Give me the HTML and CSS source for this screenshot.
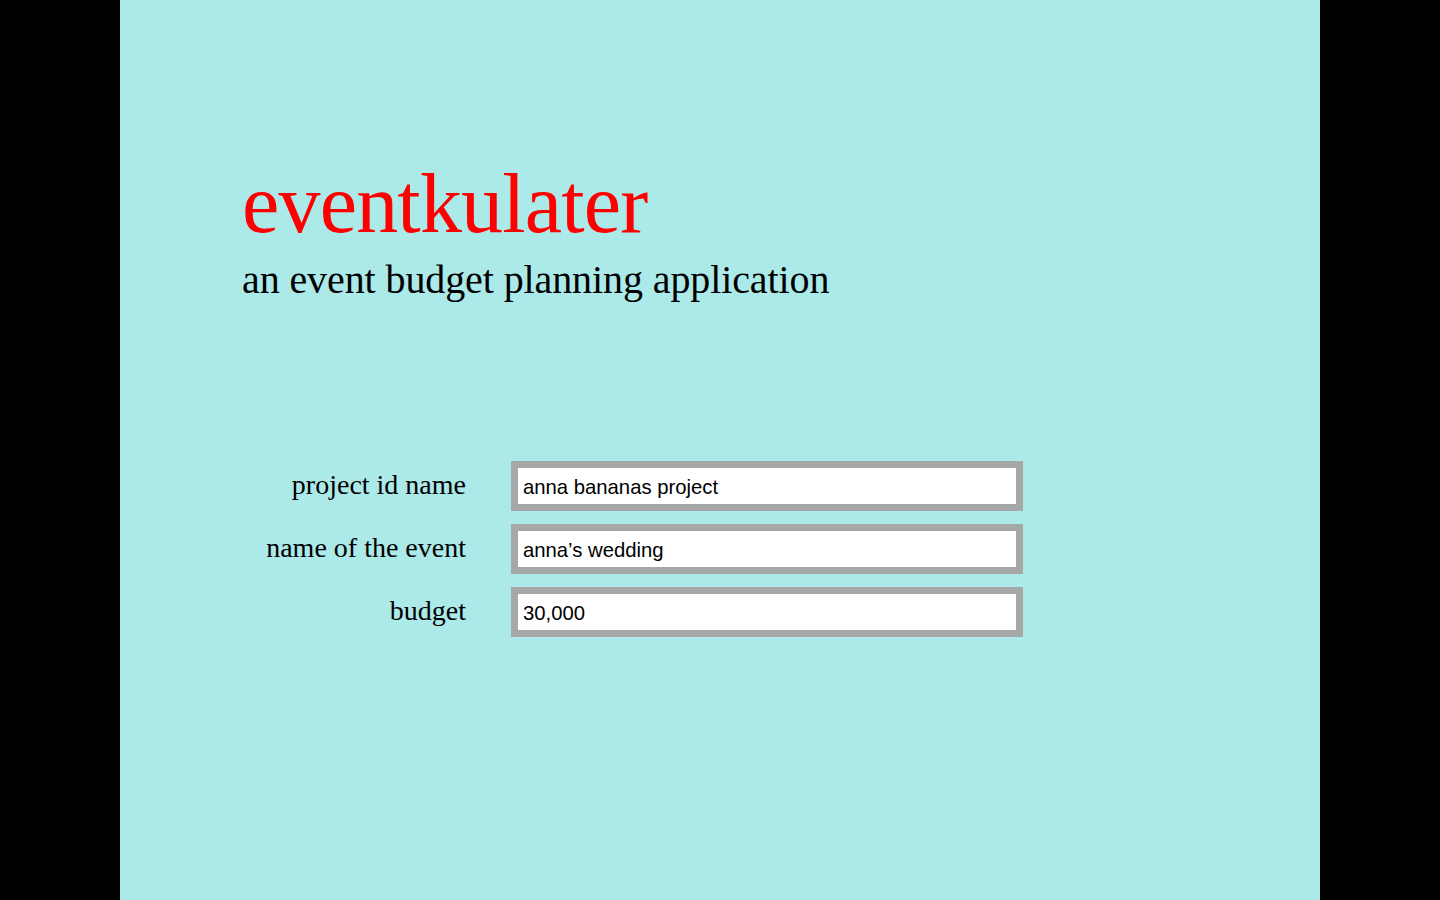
FILE: index.html
```html
<!DOCTYPE html>
<html lang="en">
<head>
<meta charset="utf-8">
<title>eventkulater</title>
<link rel="stylesheet" href="styles.css">
</head>
<body>
<main class="page">
  <header class="intro">
    <h1 class="title">eventkulater</h1>
    <p class="subtitle">an event budget planning application</p>
  </header>
  <form class="project-form">
    <label class="field-label" for="pid">project id name</label>
    <input class="field-input" id="pid" type="text" value="anna bananas project">
    <label class="field-label" for="ename">name of the event</label>
    <input class="field-input" id="ename" type="text" value="anna’s wedding">
    <label class="field-label" for="budget">budget</label>
    <input class="field-input" id="budget" type="text" value="30,000">
  </form>
</main>
</body>
</html>
```

FILE: styles.css
```css
html, body {
  margin: 0;
  padding: 0;
  background: #000000;
}

.page {
  box-sizing: border-box;
  width: 1200px;
  height: 900px;
  margin: 0 auto;
  background: #ace9e9;
  padding: 162px 0 0 122px;
  font-family: "Liberation Serif", "Times New Roman", serif;
  color: #000000;
}

.intro {
  display: flex;
  flex-direction: column;
}

.title {
  margin: 0;
  font-weight: normal;
  font-size: 84px;
  line-height: 84px;
  letter-spacing: -0.8px;
  color: #ff0000;
}

.subtitle {
  margin: 14px 0 0 0;
  font-size: 40px;
  line-height: 40px;
  letter-spacing: -0.1px;
}

.project-form {
  display: grid;
  grid-template-columns: 224px 512px;
  grid-auto-rows: 50px;
  column-gap: 45px;
  row-gap: 13px;
  margin-top: 161px;
}

.field-label {
  align-self: center;
  justify-self: end;
  font-size: 28px;
  line-height: 28px;
  padding-bottom: 3px;
}

.field-input {
  box-sizing: border-box;
  width: 512px;
  height: 50px;
  margin: 0;
  border: 7px solid #a5a8a7;
  background: #ffffff;
  padding: 3px 5px 0 5px;
  font-family: "Liberation Sans", Arial, sans-serif;
  font-size: 20.3px;
  color: #000000;
  outline: none;
  border-radius: 0;
}
```
